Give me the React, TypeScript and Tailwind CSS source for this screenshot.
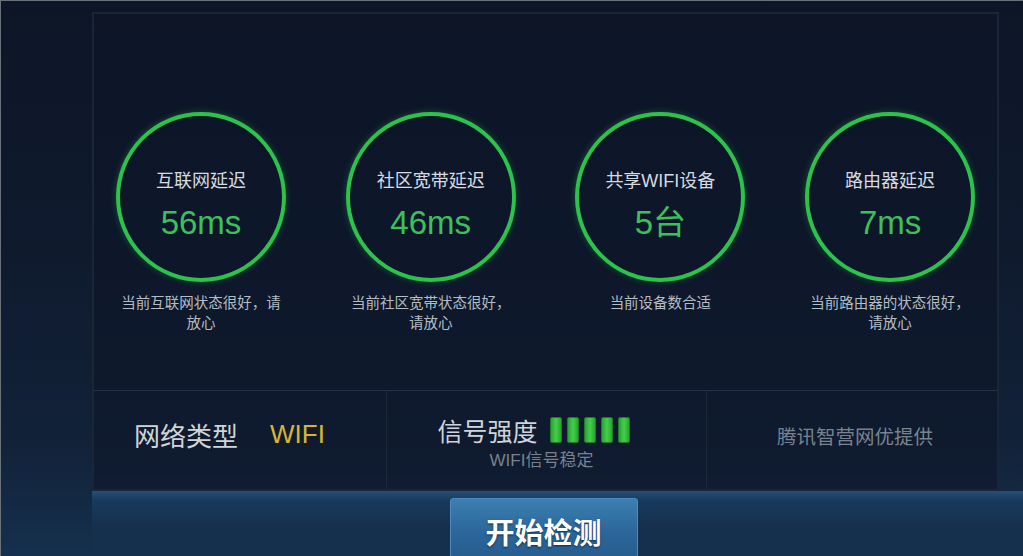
import React from "react";

const cjk = { fontFamily: '"Noto Sans CJK SC", "Noto Sans", sans-serif' };
const num = { fontFamily: '"Liberation Sans", "Noto Sans CJK SC", sans-serif' };

type Stat = { title: string; value: string; desc: string };

const stats: Stat[] = [
  { title: "互联网延迟", value: "56ms", desc: "当前互联网状态很好，请放心" },
  { title: "社区宽带延迟", value: "46ms", desc: "当前社区宽带状态很好，请放心" },
  { title: "共享WIFI设备", value: "5台", desc: "当前设备数合适" },
  { title: "路由器延迟", value: "7ms", desc: "当前路由器的状态很好，请放心" },
];

function StatCard({ s }: { s: Stat }) {
  return (
    <div className="flex flex-col items-center">
      <div className="w-[170px] h-[170px] rounded-full border-[4px] border-[#2dc24b] flex flex-col items-center pt-[53px] shadow-[0_0_6px_rgba(45,194,75,0.35)]">
        <div className="text-[18px] leading-[24px] text-[#d6dbe0]" style={num}>
          {s.title}
        </div>
        <div className="text-[33px] leading-[40px] text-[#3cc15a] mt-[10px]" style={num}>
          {s.value}
        </div>
      </div>
      <div
        className="w-[172px] mt-[10px] text-center text-[14.5px] leading-[20px] text-[#b5bcc4]"
        style={cjk}
      >
        {s.desc}
      </div>
    </div>
  );
}

export default function App() {
  return (
    <div className="relative w-[1023px] h-[556px] overflow-hidden border-t border-l border-[#6b7179] bg-[linear-gradient(180deg,#0d1627_0%,#0f1a2e_45%,#122239_80%,#15304d_100%)]">
      <div className="ml-[91px] mt-[11px] w-[907px] h-[479px] border-2 border-[#1a2538] bg-[#0d1628]/60 flex flex-col">
        <div className="h-[376px] grid grid-cols-[218px_218px_218px_218px] gap-x-[11.7px] pt-[98px] ml-[-2px]">
          {stats.map((s) => (
            <StatCard key={s.title} s={s} />
          ))}
        </div>
        <div className="flex-1 border-t border-[#253246] flex">
          <div className="w-[293px] border-r border-[#1c2738] flex items-center pl-[40px] pb-[12px]">
            <span className="text-[26px] text-[#cfd4da]" style={cjk}>
              网络类型
            </span>
            <span className="ml-[32px] text-[26px] text-[#d8b631]" style={num}>
              WIFI
            </span>
          </div>
          <div className="w-[320px] border-r border-[#1c2738] flex flex-col items-center pt-[24px]">
            <div className="flex items-center mr-[26px]">
              <span className="text-[25px] leading-[30px] text-[#cfd4da]" style={cjk}>
                信号强度
              </span>
              <div className="flex gap-[5px] ml-[12px]">
                {[0, 1, 2, 3, 4].map((i) => (
                  <div
                    key={i}
                    className="w-[12px] h-[26px] rounded-[2px] bg-[linear-gradient(90deg,#2aa234_0%,#43d04a_50%,#2aa234_100%)] border border-[#1f7a27]"
                  />
                ))}
              </div>
            </div>
            <div className="mt-[5px] mr-[10px] text-[17px] leading-[22px] text-[#77828e]" style={num}>
              WIFI信号稳定
            </div>
          </div>
          <div className="flex-1 flex items-center justify-center pb-[8px] pl-[6px]">
            <span className="text-[19.5px] text-[#78838f]" style={cjk}>
              腾讯智营网优提供
            </span>
          </div>
        </div>
      </div>
      <div className="ml-[91px] h-[60px] bg-[linear-gradient(180deg,#24507a_0%,#1a3a5c_15%,#15304d_60%,#14304c_100%)] flex justify-center">
        <div className="mt-[7px] ml-[-28px] w-[188px] h-[70px] rounded-t-[3px] border border-[#4d8cbd] bg-[linear-gradient(180deg,#3b7fb1_0%,#2b669a_50%,#245a8b_100%)] flex justify-center pt-[14px]">
          <span
            className="text-[29px] font-bold leading-[36px] text-white [text-shadow:0_1px_2px_rgba(0,0,0,0.6)]"
            style={cjk}
          >
            开始检测
          </span>
        </div>
      </div>
    </div>
  );
}
